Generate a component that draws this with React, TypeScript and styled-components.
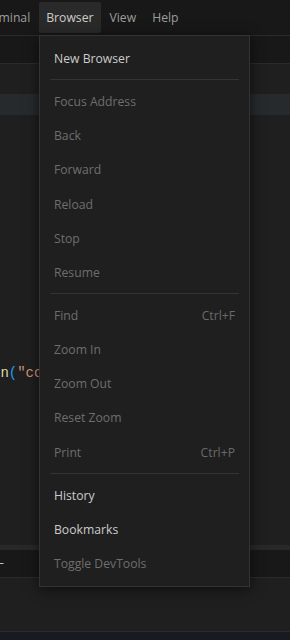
import React from "react";
import styled, { createGlobalStyle } from "styled-components";

const Global = createGlobalStyle`
  html, body { margin: 0; padding: 0; background: #1f1f1f; }
  body { font-family: "Open Sans", "Noto Sans", sans-serif; }
  * { box-sizing: border-box; }
`;

const Shell = styled.div`
  position: relative;
  width: 290px;
  height: 640px;
  overflow: hidden;
  display: flex;
  flex-direction: column;
  background: #1f1f1f;
`;

const MenuBar = styled.div`
  flex: 0 0 36px;
  display: flex;
  align-items: center;
  gap: 2px;
  background: #181818;
  border-bottom: 1px solid #2b2b2b;
  margin-left: -27px;
  padding-bottom: 1px;
`;

const MenuTitle = styled.div<{ $open?: boolean }>`
  height: 31px;
  display: flex;
  align-items: center;
  padding: 0 7px;
  font-size: 12.2px;
  color: ${(p) => (p.$open ? "#cccccc" : "#9d9d9d")};
  background: ${(p) => (p.$open ? "#2a2a2a" : "transparent")};
  border-radius: 2px;
`;

const TabStrip = styled.div`
  flex: 0 0 28px;
  background: #181818;
  border-bottom: 1px solid #2b2b2b;
`;

const Editor = styled.div`
  flex: 0 0 481px;
  display: flex;
  flex-direction: column;
  padding-top: 30px;
  background: #1f1f1f;
`;

const CurrentLine = styled.div`
  height: 21px;
  background: #262a2c;
`;

const CodeLine = styled.div`
  margin-top: 247px;
  height: 21px;
  display: flex;
  align-items: center;
  margin-left: -8px;
  font-family: "Liberation Mono", "DejaVu Sans Mono", monospace;
  font-size: 14px;
  white-space: pre;
`;

const Tok = styled.span<{ $c: string }>`
  color: ${(p) => p.$c};
`;

const Sash = styled.div`
  flex: 0 0 5px;
  background: #282828;
`;

const PanelHeader = styled.div`
  flex: 0 0 28px;
  display: flex;
  align-items: center;
  background: #181818;
  border-bottom: 1px solid #2b2b2b;
`;

const PanelMark = styled.div`
  width: 4px;
  height: 1px;
  background: #bdbdbd;
  border-right: 1px solid #9a6a4a;
`;

const PanelBody = styled.div`
  flex: 0 0 54px;
  background: #1f1f1f;
  border-bottom: 1px solid #2b2b2b;
`;

const StatusBar = styled.div`
  flex: 0 0 22px;
  background: #181a22;
`;

const Dropdown = styled.div`
  position: absolute;
  left: 39px;
  top: 35px;
  width: 211px;
  padding: 5px 0 6px;
  background: #1f1f1f;
  border: 1px solid #333333;
  box-shadow: 0 2px 12px rgba(0, 0, 0, 0.6);
  display: flex;
  flex-direction: column;
`;

const Item = styled.div<{ $disabled?: boolean }>`
  height: 34.15px;
  display: flex;
  align-items: center;
  justify-content: space-between;
  padding: 1px 14px 0 14px;
  font-size: 12.2px;
  color: ${(p) => (p.$disabled ? "#6e6e6e" : "#cccccc")};
`;

const Shortcut = styled.span`
  color: #6a6a6a;
  font-size: 12.2px;
`;

const Separator = styled.div`
  height: 1px;
  margin: 4px 10px;
  background: #343434;
`;

type Entry = { label: string; disabled?: boolean; key?: string } | "sep";

const entries: Entry[] = [
  { label: "New Browser" },
  "sep",
  { label: "Focus Address", disabled: true },
  { label: "Back", disabled: true },
  { label: "Forward", disabled: true },
  { label: "Reload", disabled: true },
  { label: "Stop", disabled: true },
  { label: "Resume", disabled: true },
  "sep",
  { label: "Find", disabled: true, key: "Ctrl+F" },
  { label: "Zoom In", disabled: true },
  { label: "Zoom Out", disabled: true },
  { label: "Reset Zoom", disabled: true },
  { label: "Print", disabled: true, key: "Ctrl+P" },
  "sep",
  { label: "History" },
  { label: "Bookmarks" },
  { label: "Toggle DevTools", disabled: true },
];

export default function App() {
  return (
    <Shell>
      <Global />
      <MenuBar>
        <MenuTitle>Terminal</MenuTitle>
        <MenuTitle $open>Browser</MenuTitle>
        <MenuTitle>View</MenuTitle>
        <MenuTitle>Help</MenuTitle>
      </MenuBar>
      <TabStrip />
      <Editor>
        <CurrentLine />
        <CodeLine>
          <Tok $c="#dcdcaa">ln</Tok>
          <Tok $c="#179fff">(</Tok>
          <Tok $c="#ce9178">"co</Tok>
        </CodeLine>
      </Editor>
      <Sash />
      <PanelHeader>
        <PanelMark />
      </PanelHeader>
      <PanelBody />
      <StatusBar />
      <Dropdown>
        {entries.map((e, i) =>
          e === "sep" ? (
            <Separator key={i} />
          ) : (
            <Item key={i} $disabled={e.disabled}>
              <span>{e.label}</span>
              {e.key && <Shortcut>{e.key}</Shortcut>}
            </Item>
          )
        )}
      </Dropdown>
    </Shell>
  );
}
